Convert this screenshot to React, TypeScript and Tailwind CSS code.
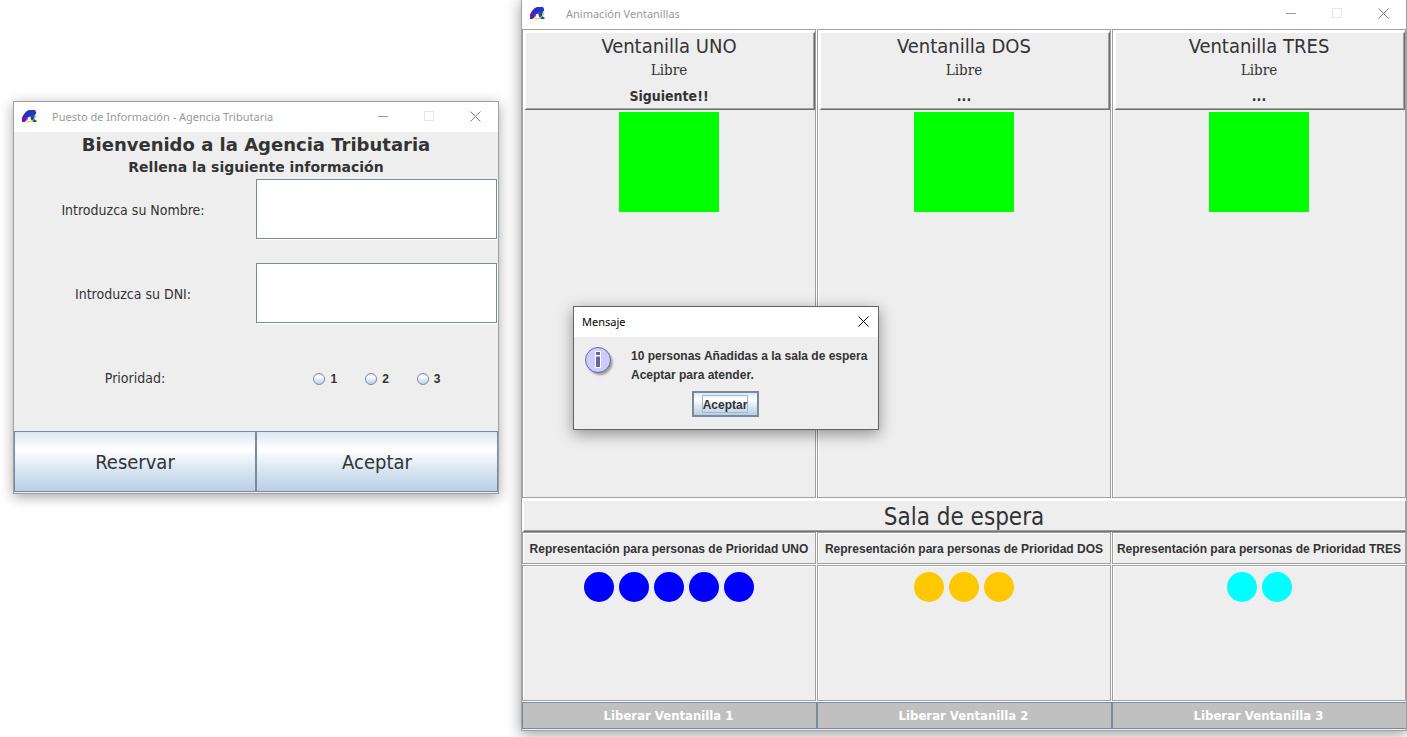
import type { ReactNode } from "react";

function AppIcon() {
  return (
    <svg width="16" height="14" viewBox="0 0 16 14" aria-hidden="true" className="shrink-0">
      <path d="M0 12 V8 L2 4 L5 1 L8 0 H13 L14 2 V4 L12 5 L9 6 L7 7 L5 8 L4 11 L2 12 Z" fill="#1f35d2" />
      <path d="M0 12 V8 L2 4.500 L5 5 L4.500 8 L3 11 L2 12 Z" fill="#5a1cc0" />
      <path d="M2.500 4 L5 1 L8 0 L10 3 L6 5 Z" fill="#2a2fc4" />
      <path d="M8 5.500 L13 4 L12.500 7 L12 9 L14.500 10.500 V12 H11 L9 9.500 Z" fill="#0b55a4" />
      <path d="M4 8 L5.500 7 L6 9 L4.500 10.500 Z" fill="#dc1f2c" />
      <path d="M4.500 12 Q10 12.500 12.500 9 Q14 7 14 4.500" fill="none" stroke="#f0bd2a" strokeWidth="1" />
    </svg>
  );
}

function CloseGlyph() {
  return (
    <svg width="11" height="11" viewBox="0 0 11 11" aria-hidden="true">
      <path d="M0.5 0.5 L10.5 10.5 M10.5 0.5 L0.5 10.5" stroke="currentColor" fill="none" />
    </svg>
  );
}

function TitleBar({ title, titleClass }: { title: string; titleClass: string }) {
  const button = "flex h-[30px] w-[46px] items-center justify-center";
  return (
    <header className="flex h-[30px] shrink-0 items-center bg-white pl-2 font-['Noto_Sans',sans-serif] text-[11px] text-[#999999]">
      <AppIcon />
      <h2 className={"flex-1 whitespace-nowrap " + titleClass}>{title}</h2>
      <button type="button" aria-label="Minimizar" className={button}>
        <svg width="10" height="10" viewBox="0 0 10 10" aria-hidden="true">
          <path d="M0 4.500 H10" stroke="currentColor" />
        </svg>
      </button>
      <button type="button" aria-label="Maximizar" disabled className={button + " pb-0.5 text-[#e6e6e6]"}>
        <svg width="10" height="10" viewBox="0 0 10 10" aria-hidden="true">
          <rect x="0.5" y="0.5" width="9" height="9" fill="none" stroke="currentColor" />
        </svg>
      </button>
      <button type="button" aria-label="Cerrar" className={button + " pb-px text-[#808080]"}>
        <CloseGlyph />
      </button>
    </header>
  );
}

function Etched({ className, children }: { className: string; children?: ReactNode }) {
  return (
    <div
      className={
        "mr-px mb-px border border-[#a0a0a0] shadow-[inset_1px_1px_0_#ffffff,1px_1px_0_#ffffff] " + className
      }
    >
      {children}
    </div>
  );
}

const bevel =
  "border-t-2 border-r border-b border-l-2 border-t-white border-l-white border-r-[#6f6f6f] border-b-[#6f6f6f] shadow-[inset_-1px_-1px_0_#a0a0a0]";

const metal = "bg-[linear-gradient(to_bottom,#dde8f3_0%,#ffffff_30%,#dde8f3_60%,#b8cfe5_100%)]";

function TextRow({ id, label }: { id: string; label: string }) {
  return (
    <div className="grid h-[61px] grid-cols-2">
      <label htmlFor={id} className="flex items-center justify-center pr-1 text-sm">
        {label}
      </label>
      <input
        id={id}
        type="text"
        className="mr-px mb-px border border-[#7a8a99] bg-white px-1 text-sm shadow-[1px_1px_0_#ffffff] outline-none"
      />
    </div>
  );
}

function InfoWindow() {
  return (
    <section className="absolute top-[101px] left-[13px] w-[486px] border border-[#a0a0a0] bg-[#eeeeee] font-['DejaVu_Sans_Condensed','DejaVu_Sans',sans-serif] text-[#333333] shadow-[0_3px_12px_rgba(0,0,0,0.35)]">
      <TitleBar title="Puesto de Información - Agencia Tributaria" titleClass="pl-[14px]" />
      <form className="pb-px" onSubmit={(e) => e.preventDefault()}>
        <div className="pb-0.5 text-center font-['DejaVu_Sans',sans-serif] font-bold">
          <h1 className="text-lg leading-[25px]">Bienvenido a la Agencia Tributaria</h1>
          <p className="text-sm leading-5">Rellena la siguiente información</p>
        </div>
        <div className="flex flex-col gap-[23px]">
          <TextRow id="nombre" label="Introduzca su Nombre:" />
          <TextRow id="dni" label="Introduzca su DNI:" />
          <div role="radiogroup" aria-labelledby="prioridad" className="grid h-[61px] grid-cols-2 items-center">
            <span id="prioridad" className="text-center text-sm">
              Prioridad:
            </span>
            <div className="flex justify-center gap-7 pt-0.5">
              {[1, 2, 3].map((n) => (
                <label
                  key={n}
                  className="flex items-center gap-[5px] font-['Liberation_Sans',sans-serif] text-xs font-bold"
                >
                  <input
                    type="radio"
                    name="prioridad"
                    className={"size-3 appearance-none rounded-full border border-[#7a8a99] " + metal}
                  />
                  {n}
                </label>
              ))}
            </div>
          </div>
          <div className="grid h-[61px] grid-cols-2 text-xl">
            <button type="button" className={"border border-[#7a8a99] " + metal}>
              Reservar
            </button>
            <button type="submit" className={"border border-[#7a8a99] " + metal}>
              Aceptar
            </button>
          </div>
        </div>
      </form>
    </section>
  );
}

const desks = [
  { name: "Ventanilla UNO", call: "Siguiente!!" },
  { name: "Ventanilla DOS", call: "..." },
  { name: "Ventanilla TRES", call: "..." },
];

const queues = [
  { name: "UNO", count: 5, color: "bg-[#0000ff]" },
  { name: "DOS", count: 3, color: "bg-[#ffc800]" },
  { name: "TRES", count: 2, color: "bg-[#00ffff]" },
];

function DesksWindow() {
  return (
    <section className="absolute top-[-2px] right-0 bottom-1.5 left-[521px] flex flex-col overflow-hidden border border-[#a0a0a0] bg-[#eeeeee] pb-px font-['DejaVu_Sans_Condensed','DejaVu_Sans',sans-serif] text-[#333333] shadow-[0_3px_14px_rgba(0,0,0,0.4)]">
      <TitleBar title="Animación Ventanillas" titleClass="pl-5" />
      <div className="-mr-px flex flex-1 flex-col">
        <div className="grid flex-1 grid-cols-3">
          {desks.map((d) => (
            <Etched key={d.name} className="pt-px pl-px">
              <div className={"pr-0.5 text-center " + bevel}>
                <h3 className="text-xl leading-[26px]">{d.name}</h3>
                <p className="font-['DejaVu_Serif_Condensed','DejaVu_Serif',serif] text-[15px] leading-[23px]">
                  Libre
                </p>
                <p className="pt-0.5 text-sm leading-[25px] font-bold">{d.call}</p>
              </div>
              <div className="flex justify-center pt-0.5 pr-px">
                <div className="size-[100px] bg-[#00ff00]" />
              </div>
            </Etched>
          ))}
        </div>
        <h3 className={"h-[33px] pt-px pr-0.5 text-center text-2xl leading-[30px] " + bevel}>Sala de espera</h3>
        <div className="grid h-[33px] grid-cols-3 font-['Liberation_Sans',sans-serif] text-xs font-bold">
          {queues.map((q) => (
            <Etched key={q.name} className="flex items-center justify-center pt-0.5 whitespace-nowrap">
              Representación para personas de Prioridad {q.name}
            </Etched>
          ))}
        </div>
        <div className="grid h-[137px] grid-cols-3">
          {queues.map((q) => (
            <Etched key={q.name} className="flex justify-center gap-[5px] pt-1.5">
              {Array.from({ length: q.count }, (_, i) => (
                <span key={i} className={"size-[30px] rounded-full " + q.color} />
              ))}
            </Etched>
          ))}
        </div>
        <div className="grid h-[27px] grid-cols-3 text-[13px] font-bold text-white">
          {[1, 2, 3].map((n) => (
            <button key={n} type="button" className="border border-[#7a8a99] bg-[#c0c0c0] pt-px pr-0.5">
              Liberar Ventanilla {n}
            </button>
          ))}
        </div>
      </div>
    </section>
  );
}

function InfoIcon() {
  return (
    <svg width="32" height="32" viewBox="0 0 32 32" aria-hidden="true" className="shrink-0">
      <defs>
        <filter id="soft" x="-20%" y="-20%" width="150%" height="150%">
          <feGaussianBlur stdDeviation="1.2" />
        </filter>
      </defs>
      <circle cx="15" cy="15.5" r="12.5" fill="#000000" opacity="0.35" filter="url(#soft)" />
      <circle cx="13" cy="13" r="12.5" fill="#ccccff" stroke="#666699" />
      <path d="M10 4 H16 V21 H10 Z" fill="#ffffff" />
      <path d="M11 5 H15 V8 H11 Z M11 9.500 H15 V20 H11 Z" fill="#666699" />
    </svg>
  );
}

function MessageDialog() {
  return (
    <div
      role="dialog"
      aria-label="Mensaje"
      className="absolute top-[306px] left-[573px] w-[306px] border border-[#646464] bg-[#eeeeee] font-['Liberation_Sans',sans-serif] text-xs font-bold text-[#333333] shadow-[0_4px_14px_rgba(0,0,0,0.4)]"
    >
      <header className="flex h-[30px] items-center bg-white pl-2 font-['Noto_Sans',sans-serif] text-[11px] font-normal text-black">
        <h2 className="flex-1">Mensaje</h2>
        <button
          type="button"
          aria-label="Cerrar"
          className="flex h-[30px] w-[30px] items-center justify-center pb-px"
        >
          <CloseGlyph />
        </button>
      </header>
      <div className="flex gap-[14px] pt-[10px] pl-[11px]">
        <InfoIcon />
        <div className="leading-[19px] whitespace-nowrap">
          <p>10 personas Añadidas a la sala de espera</p>
          <p>Aceptar para atender.</p>
        </div>
      </div>
      <div className="flex justify-center pt-1.5 pr-0.5 pb-3">
        <button
          type="button"
          className={"flex h-[26px] w-[67px] items-center justify-center border-2 border-[#7a8a99] " + metal}
        >
          <span className="border border-[#a3b8cc] pt-0.5 leading-[14px]">Aceptar</span>
        </button>
      </div>
    </div>
  );
}

export default function App() {
  return (
    <main className="relative min-h-screen overflow-hidden bg-white">
      <InfoWindow />
      <DesksWindow />
      <MessageDialog />
    </main>
  );
}
